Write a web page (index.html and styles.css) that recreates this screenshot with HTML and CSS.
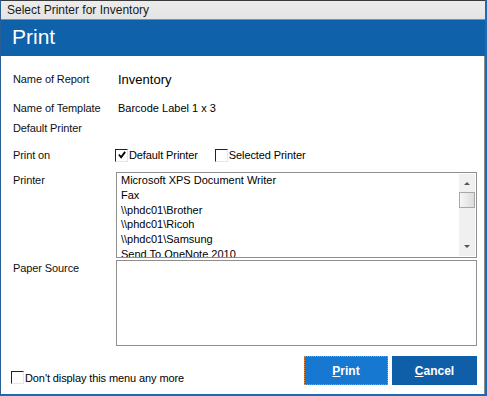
FILE: index.html
```html
<!DOCTYPE html>
<html lang="en">
<head>
  <meta charset="UTF-8" />
  <title>Select Printer for Inventory</title>
  <link rel="stylesheet" href="styles.css">
</head>
<body>
  <div class="window">
    <div class="titlebar">Select Printer for Inventory</div>
    <div class="header">Print</div>

    <div class="content">
      <div class="row row-report">
        <span class="label">Name of Report</span>
        <span class="value big">Inventory</span>
      </div>
      <div class="row row-template">
        <span class="label">Name of Template</span>
        <span class="value">Barcode Label 1 x 3</span>
      </div>
      <div class="row">
        <span class="label">Default Printer</span>
      </div>
      <div class="row row-printon">
        <span class="label">Print on</span>
        <label class="check">
          <span class="box checked">
            <svg width="8" height="8" viewBox="0 0 9 9"><path d="M1 4 L3.5 7 L8 1" fill="none" stroke="#000" stroke-width="2"/></svg>
          </span>
          Default Printer
        </label>
        <label class="check check-second">
          <span class="box"></span>
          Selected Printer
        </label>
      </div>

      <div class="row row-list">
        <span class="label">Printer</span>
        <div class="listbox">
          <ul class="items">
            <li>Microsoft XPS Document Writer</li>
            <li>Fax</li>
            <li>\\phdc01\Brother</li>
            <li>\\phdc01\Ricoh</li>
            <li>\\phdc01\Samsung</li>
            <li>Send To OneNote 2010</li>
          </ul>
          <div class="scrollbar">
            <span class="arrow up"></span>
            <span class="thumb"></span>
            <span class="arrow down"></span>
          </div>
        </div>
      </div>

      <div class="row row-paper">
        <span class="label">Paper Source</span>
        <div class="paperbox"></div>
      </div>

      <div class="footer">
        <label class="check footer-check">
          <span class="box"></span>
          Don't display this menu any more
        </label>
        <div class="buttons">
          <button class="btn btn-print"><u>P</u>rint</button>
          <button class="btn btn-cancel"><u>C</u>ancel</button>
        </div>
      </div>
    </div>
  </div>
</body>
</html>
```

FILE: styles.css
```css
body {
  margin: 0;
  padding: 0;
  font-family: 'Liberation Sans', Arial, sans-serif;
  font-size: 11px;
  color: #000;
  background: #fff;
}
.window {
  width: 487px;
  height: 396px;
  box-sizing: border-box;
  border-left: 1px solid #2a5f96;
  border-right: 2px solid #1a6bb8;
  border-bottom: 2px solid #1a6bb8;
  display: flex;
  flex-direction: column;
  background: #fff;
}
.titlebar {
  height: 20px;
  box-sizing: border-box;
  border-top: 1px solid #3a3a3a;
  border-bottom: 1px solid #8c8c8c;
  background: linear-gradient(#ececec, #e4e4e4);
  padding-left: 6px;
  font-size: 12px;
  line-height: 19px;
  color: #1a1a1a;
}
.header {
  height: 36px;
  background: #0f61a9;
  color: #fff;
  font-size: 21px;
  line-height: 34px;
  padding-left: 11px;
}
.content {
  flex: 1;
  padding: 0 7px 0 12px;
  border-right: 1px solid #8a8a8a;
  display: flex;
  flex-direction: column;
}
.row {
  display: flex;
  align-items: center;
  height: 20px;
}
.label {
  width: 103px;
  flex-shrink: 0;
  color: #111;
  letter-spacing: -0.1px;
}
.value {
  padding-left: 2px;
}
.value.big {
  font-size: 13px;
}
.row-report {
  margin-top: 13px;
}
.row-template {
  margin-top: 9px;
}
.row-printon {
  margin-top: 7px;
}
.check {
  display: flex;
  align-items: center;
  gap: 1px;
  letter-spacing: -0.1px;
}
.row-printon .check:first-of-type {
  margin-left: -1px;
}
.check-second {
  margin-left: 17px;
}
.box {
  width: 11px;
  height: 11px;
  border-top: 1px solid #222;
  border-left: 1px solid #222;
  border-right: 1px solid #e6e6e6;
  border-bottom: 1px solid #e6e6e6;
  background: #fff;
  display: flex;
  align-items: center;
  justify-content: center;
}
.row-list {
  margin-top: 7px;
  height: 86px;
  align-items: flex-start;
}
.row-list .label,
.row-paper .label {
  line-height: 14px;
  padding-top: 1px;
}
.listbox {
  flex: 1;
  height: 86px;
  box-sizing: border-box;
  border: 1px solid #8f8f8f;
  display: flex;
  overflow: hidden;
}
.items {
  flex: 1;
  list-style: none;
  margin: 0;
  padding: 0 0 0 4px;
  line-height: 14.8px;
  font-size: 11px;
}
.scrollbar {
  width: 16px;
  margin: 1px 1px 1px 0;
  background: #f0f0f0;
  position: relative;
}
.arrow {
  position: absolute;
  left: 5px;
  width: 0;
  height: 0;
  border-left: 3px solid transparent;
  border-right: 3px solid transparent;
}
.arrow.up {
  top: 8px;
  border-bottom: 3px solid #555;
}
.arrow.down {
  bottom: 8px;
  border-top: 3px solid #555;
}
.thumb {
  position: absolute;
  left: 0;
  top: 18px;
  width: 14px;
  height: 14px;
  border: 1px solid #a8a8a8;
  background: linear-gradient(90deg, #f6f6f6, #dcdcdc);
}
.row-paper {
  margin-top: 2px;
  height: 86px;
  align-items: flex-start;
}
.paperbox {
  flex: 1;
  height: 86px;
  box-sizing: border-box;
  border: 1px solid #8f8f8f;
}
.footer {
  display: flex;
  justify-content: space-between;
  align-items: flex-end;
  margin-top: 10px;
}
.footer-check {
  margin-left: -2px;
  margin-bottom: 1px;
}
.buttons {
  display: flex;
  gap: 4px;
}
.btn {
  height: 29px;
  border: none;
  color: #fff;
  font-family: 'Liberation Sans', Arial, sans-serif;
  font-size: 12px;
  font-weight: bold;
  padding: 0;
}
.btn-print {
  width: 84px;
  background: #1678d0;
  outline: 1px dotted #e08a3a;
  outline-offset: -1px;
}
.btn-cancel {
  width: 85px;
  background: #0f5fa8;
}
```
